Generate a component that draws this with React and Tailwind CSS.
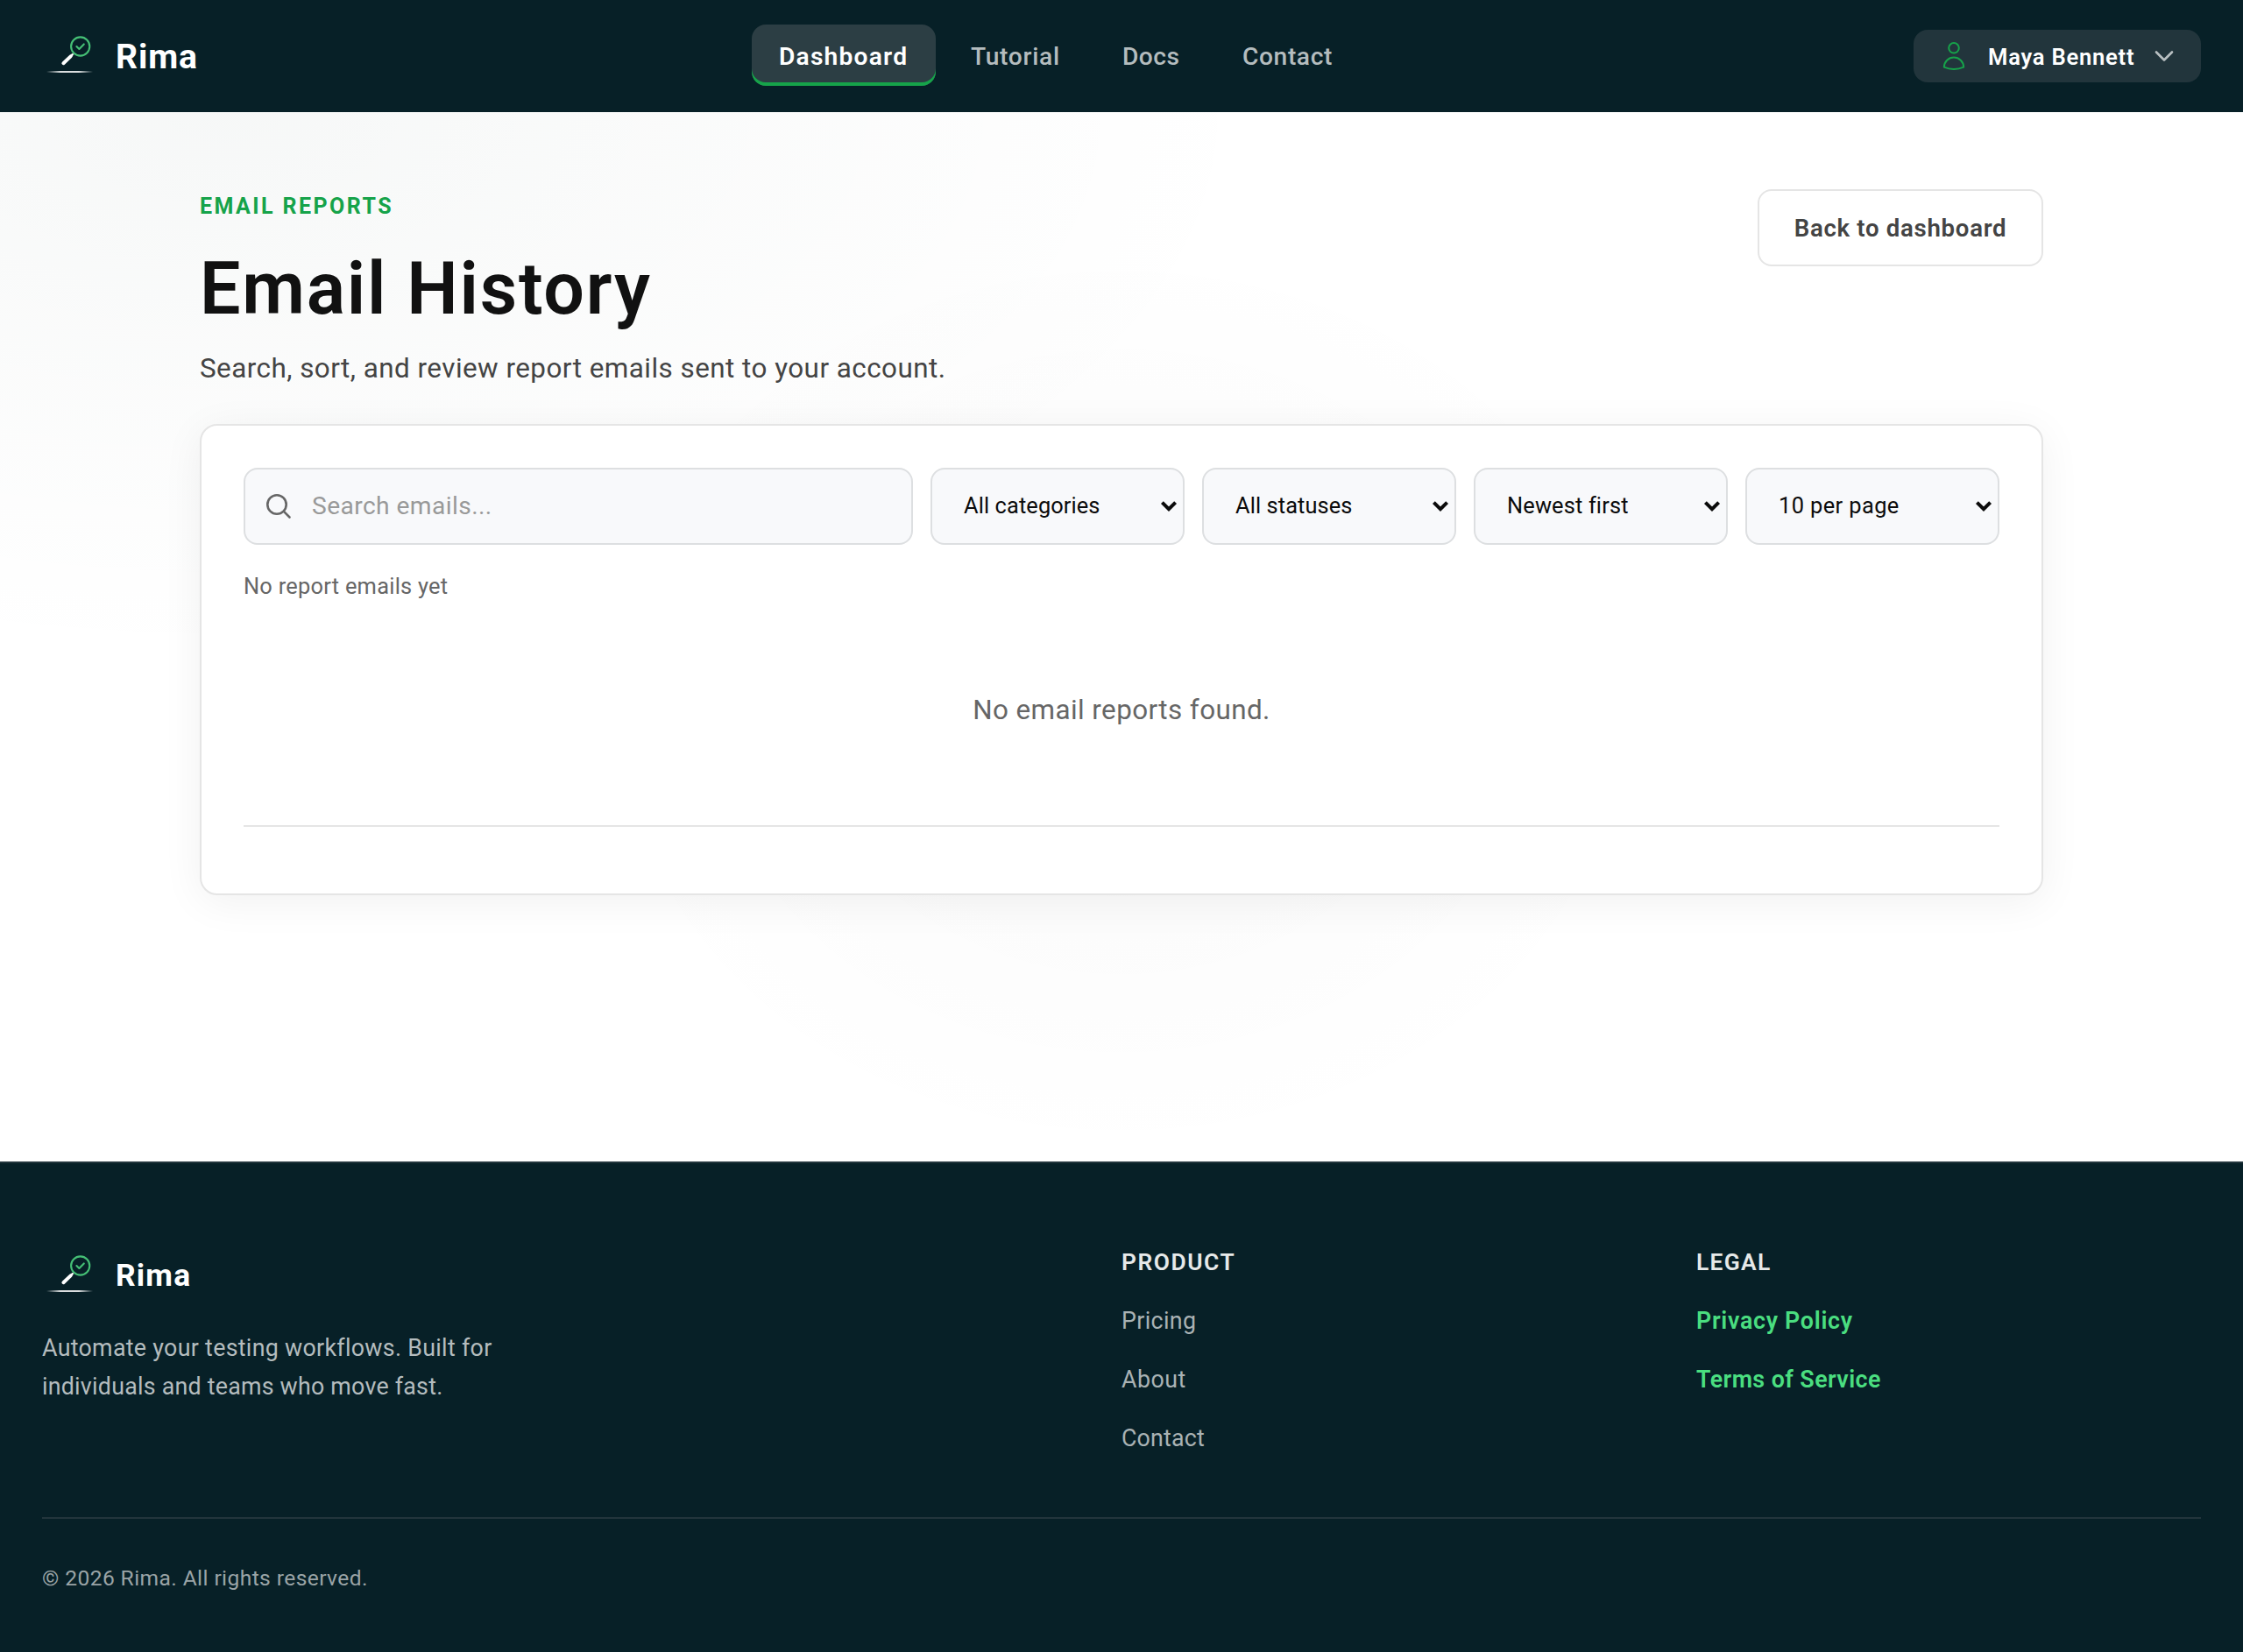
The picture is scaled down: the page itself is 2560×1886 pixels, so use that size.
import React from "react";

function Mark({ id }) {
  return (
    <svg viewBox="0 0 60 60" className="h-[60px] w-[60px] shrink-0" fill="none">
      <defs>
        <linearGradient id={id} gradientUnits="userSpaceOnUse" x1="5" y1="0" x2="58" y2="0">
          <stop offset="0" stopColor="#fff" stopOpacity="0" />
          <stop offset="0.3" stopColor="#fff" stopOpacity="0.85" />
          <stop offset="0.7" stopColor="#fff" stopOpacity="0.85" />
          <stop offset="1" stopColor="#fff" stopOpacity="0" />
        </linearGradient>
      </defs>
      <circle cx="43.7" cy="19" r="10.6" stroke="#45bf75" strokeWidth="2.1" />
      <path d="M39.4 19l3 3 5.4-5.6" stroke="#45bf75" strokeWidth="2.1" strokeLinecap="round" strokeLinejoin="round" />
      <path d="M34.8 28.2l-1.6 1.6" stroke="#fff" strokeWidth="2.4" strokeLinecap="round" />
      <path d="M32.6 30.4l-8.2 7.8" stroke="#fff" strokeWidth="4" strokeLinecap="round" />
      <rect x="5" y="47" width="53" height="2" fill={`url(#${id})`} />
    </svg>
  );
}

function Select({ label }) {
  return (
    <button className="flex h-[88px] w-[290px] items-center justify-between rounded-[16px] border-2 border-[#dddfe1] bg-[#f8f9fb] pr-[6px] pb-px pl-[36px] text-[25.4px] text-[#0b0b0b]">
      {label}
      <svg viewBox="0 0 20 14" className="mt-px h-[14px] w-[20px]" fill="none">
        <path d="M2.4 2.6L10 10.2l7.6-7.6" stroke="#0b0b0b" strokeWidth="4" />
      </svg>
    </button>
  );
}

export default function App() {
  return (
    <div className="flex min-h-[1886px] w-full flex-col bg-white font-['Roboto',sans-serif] whitespace-nowrap">
      <header className="flex h-[128px] items-center justify-between bg-[#072027] px-12">
        <a className="flex w-[178px] items-center gap-6">
          <Mark id="mark-header" />
          <span className="pt-[3px] text-[39.2px] leading-none font-bold tracking-[0.9px] text-white">Rima</span>
        </a>
        <nav className="mb-[2px] flex gap-2 text-[28.2px] leading-none font-medium text-[#b4bcbe]">
          <a className="flex h-[70px] w-[210px] items-center rounded-[16px] bg-[#2c3e44] pt-[4px] pl-[31px] font-semibold tracking-[1.2px] text-white shadow-[inset_0_-4px_0_#16a34a]">Dashboard</a>
          <a className="flex h-[70px] w-[165px] items-center pt-[4px] pl-8 tracking-[0.7px]">Tutorial</a>
          <a className="flex h-[70px] w-[130px] items-center pt-[4px] pl-8 tracking-[0.46px]">Docs</a>
          <a className="flex h-[70px] w-[165px] items-center pt-[4px] pl-[31px] tracking-[0.6px]">Contact</a>
        </nav>
        <button className="flex h-[60px] w-[328px] items-center rounded-[16px] bg-[#22353c] pl-[30px]">
          <svg viewBox="0 0 32 40" className="h-[40px] w-[32px]" fill="none" stroke="#16a34a" strokeWidth="2">
            <circle cx="16" cy="10.8" r="5.8" />
            <path d="M4.8 32.6C5 26.4 10 21.6 16 21.6s11 4.8 11.2 11C23.6 34.2 20 35 16 35s-7.6-.8-11.2-2.4z" strokeLinejoin="round" />
          </svg>
          <span className="ml-[23px] w-[166px] pt-[3px] text-left text-[25.6px] leading-none font-semibold tracking-[0.76px] text-white">Maya Bennett</span>
          <svg viewBox="0 0 24 24" className="ml-[23px] h-[24px] w-[24px]" fill="none">
            <path d="M3 7.5l9 9 9-9" stroke="#b9c0c2" strokeWidth="2.6" strokeLinecap="round" strokeLinejoin="round" />
          </svg>
        </button>
      </header>

      <main className="h-[1198px] bg-[radial-gradient(1200px_630px_at_10%_0%,rgba(7,50,40,0.034),transparent),radial-gradient(627px_535px_at_50%_672px,rgba(0,0,0,0.024),transparent)] px-[228px] pt-[88px]">
        <div className="flex items-start justify-between">
          <div>
            <div className="text-[25px] leading-[40px] font-bold tracking-[2.43px] text-[#16a34a]">EMAIL REPORTS</div>
            <h1 className="mt-[26px] text-[82.5px] leading-[96px] font-semibold tracking-[1.75px] text-[#111]">Email History</h1>
            <p className="mt-[19px] text-[31.4px] leading-[48px] tracking-[0.47px] text-[#444]">Search, sort, and review report emails sent to your account.</p>
          </div>
          <a className="flex h-[88px] w-[326px] items-center justify-center rounded-[16px] border-2 border-[#e5e5e5] bg-white pt-px text-[27.6px] font-semibold tracking-[0.7px] text-[#444]">Back to dashboard</a>
        </div>

        <section className="mt-[39px] h-[538px] rounded-[20px] border-2 border-[#e5e5e5] bg-white p-12 shadow-[0_8px_48px_rgba(0,0,0,0.06)]">
          <div className="flex gap-5">
            <div className="flex h-[88px] flex-1 items-center rounded-[16px] border-2 border-[#dddfe1] bg-[#f8f9fb] pl-[22px] text-[28.2px] tracking-[0.41px] text-[#999]">
              <svg viewBox="0 0 32 32" className="h-[32px] w-[32px]" fill="none" stroke="#666" strokeWidth="2.6" strokeLinecap="round">
                <circle cx="14" cy="14" r="10.7" />
                <path d="M21.9 21.9l6.6 6.6" />
              </svg>
              <span className="ml-[22px]">Search emails...</span>
            </div>
            <Select label={<span className="tracking-[0.1px]">All categories</span>} />
            <Select label={<span className="tracking-[0.09px]">All statuses</span>} />
            <Select label={<span className="tracking-[0.15px]">Newest first</span>} />
            <Select label={<span className="tracking-[0.4px]">10 per page</span>} />
          </div>
          <p className="mt-[27px] text-[25.4px] leading-[40px] tracking-[0.26px] text-[#666]">No report emails yet</p>
          <div className="flex h-[253px] items-center justify-center pb-[10px] text-[31.4px] tracking-[0.42px] text-[#666]">No email reports found.</div>
          <div className="h-[2px] bg-[#e5e5e5]" />
        </section>
      </main>

      <footer className="flex h-[560px] flex-col border-t-2 border-[#22353c] bg-[#072027] px-12 pt-[93px]">
        <div className="grid h-[255px] grid-cols-[2fr_1fr_1fr] gap-[80px]">
          <div>
            <a className="mt-[5px] flex items-center gap-6">
              <Mark id="mark-footer" />
              <span className="pt-[2px] text-[35.4px] leading-none font-bold tracking-[1.15px] text-white">Rima</span>
            </a>
            <p className="mt-[32px] text-[26.8px] leading-[43.5px] tracking-[0.3px] text-[#b4bcbe]">
              Automate your testing workflows. Built for
              <br />
              <span className="tracking-[0.23px]">individuals and teams who move fast.</span>
            </p>
          </div>
          <div className="text-[26.8px] leading-[67px] text-[#a9b2b4]">
            <div className="mb-[14px] text-[26.4px] leading-[40px] font-semibold tracking-[1.52px] text-[#e6e9e9]">PRODUCT</div>
            <div className="tracking-[0.35px]">Pricing</div>
            <div className="tracking-[0.48px]">About</div>
            <div className="tracking-[0.18px]">Contact</div>
          </div>
          <div className="text-[26.8px] leading-[67px] font-semibold text-[#4ade80]">
            <div className="mb-[14px] text-[26.4px] leading-[40px] tracking-[1.3px] text-[#e6e9e9]">LEGAL</div>
            <div className="tracking-[0.72px]">Privacy Policy</div>
            <div className="tracking-[0.44px]">Terms of Service</div>
          </div>
        </div>
        <div className="mt-[56px] flex flex-1 items-center border-t-2 border-[#22353c] pb-[16px] text-[24.6px] tracking-[0.4px] text-[#9aa4a6]">© 2026 Rima. All rights reserved.</div>
      </footer>
    </div>
  );
}
